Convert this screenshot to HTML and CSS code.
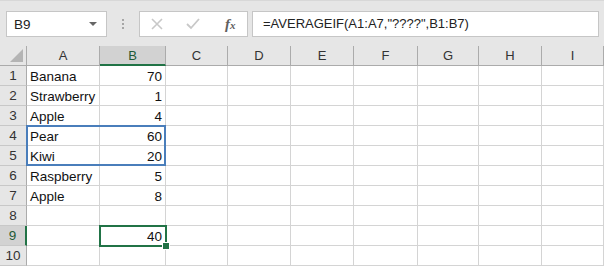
FILE: index.html
```html
<!DOCTYPE html>
<html lang="en">
<head>
    <meta charset="UTF-8">
    <title>AVERAGEIF</title>
    <link rel="stylesheet" href="styles.css">
</head>
<body>
    <div class="toolbar">
        <div class="name-box">
            <span>B9</span>
            <span class="caret"></span>
        </div>
        <div class="grip">
            <span></span><span></span><span></span>
        </div>
        <div class="fx-box">
            <svg width="12" height="12" viewBox="0 0 12 12"><path d="M1 1 L11 11 M11 1 L1 11" stroke="#c8c8c8" stroke-width="1.6" fill="none"/></svg>
            <svg width="14" height="12" viewBox="0 0 14 12"><path d="M1 6 L5 10 L13 1" stroke="#c8c8c8" stroke-width="1.8" fill="none"/></svg>
            <span class="fx">f<i>x</i></span>
        </div>
        <div class="formula">=AVERAGEIF(A1:A7,"????",B1:B7)</div>
    </div>

    <div class="sheet" id="sheet">
        <div class="corner"><span></span></div>
    </div>

    <script>
        const cols = ['A', 'B', 'C', 'D', 'E', 'F', 'G', 'H', 'I'];
        const data = {
            1: ['Banana', 70], 2: ['Strawberry', 1], 3: ['Apple', 4],
            4: ['Pear', 60], 5: ['Kiwi', 20], 6: ['Raspberry', 5],
            7: ['Apple', 8], 9: ['', 40]
        };
        const sheet = document.getElementById('sheet');

        cols.forEach(c => {
            const h = document.createElement('div');
            h.className = 'col-head' + (c === 'B' ? ' active' : '');
            h.textContent = c;
            sheet.appendChild(h);
        });

        for (let r = 1; r <= 10; r++) {
            const rh = document.createElement('div');
            rh.className = 'row-head' + (r === 9 ? ' active' : '');
            rh.textContent = r;
            sheet.appendChild(rh);
            cols.forEach((c, i) => {
                const cell = document.createElement('div');
                cell.className = 'cell' + (i === 1 ? ' num' : '');
                if (data[r] && i < 2) cell.textContent = data[r][i];
                sheet.appendChild(cell);
            });
        }

        const range = document.createElement('div');
        range.className = 'range';
        sheet.appendChild(range);

        const sel = document.createElement('div');
        sel.className = 'selection';
        sel.innerHTML = '<span class="handle"></span>';
        sheet.appendChild(sel);
    </script>
</body>
</html>
```

FILE: styles.css
```css
body {
    margin: 0;
    background: #ffffff;
    font-family: "Liberation Sans", Arial, sans-serif;
    width: 604px;
    height: 267px;
    overflow: hidden;
}

.toolbar {
    height: 46px;
    background: #e6e6e6;
    border-top: 1px solid #d8d8d8;
    box-sizing: border-box;
    display: flex;
    align-items: flex-start;
    padding: 10px 0 0 6px;
}

.name-box {
    width: 101px;
    height: 26px;
    box-sizing: border-box;
    background: #fff;
    border: 1px solid #c6c6c6;
    display: flex;
    align-items: center;
    justify-content: space-between;
    padding: 0 9px 0 7px;
    font-size: 13.5px;
    color: #222;
}

.caret {
    width: 0;
    height: 0;
    border-left: 4px solid transparent;
    border-right: 4px solid transparent;
    border-top: 4px solid #666;
}

.grip {
    width: 32px;
    height: 26px;
    display: flex;
    flex-direction: column;
    align-items: center;
    justify-content: center;
    gap: 2px;
}

.grip span {
    width: 2px;
    height: 2px;
    background: #a6a6a6;
}

.fx-box {
    width: 109px;
    height: 26px;
    box-sizing: border-box;
    background: #fff;
    border: 1px solid #c6c6c6;
    display: flex;
    align-items: center;
    padding-left: 11px;
    gap: 23px;
}

.fx {
    font-family: "Liberation Serif", "Times New Roman", serif;
    font-style: italic;
    font-weight: bold;
    font-size: 15px;
    color: #606060;
    margin-left: 2px;
}

.fx i {
    font-size: 11px;
}

.formula {
    margin-left: 4px;
    width: 347px;
    height: 26px;
    box-sizing: border-box;
    background: #fff;
    border: 1px solid #c6c6c6;
    padding-left: 10px;
    font-size: 13px;
    line-height: 24px;
    color: #222;
}

.sheet {
    position: relative;
    display: grid;
    grid-template-columns: 27px 73px 66px 62px 63px 63px 64px 61px 63px 62px;
    grid-auto-rows: 20px;
    font-size: 13.5px;
    color: #111;
}

.corner {
    background: #e6e6e6;
    border-right: 1px solid #ababab;
    border-bottom: 1px solid #ababab;
    box-sizing: border-box;
    position: relative;
}

.corner span {
    position: absolute;
    right: 3px;
    bottom: 3px;
    width: 0;
    height: 0;
    border-left: 13px solid transparent;
    border-bottom: 13px solid #b4b4b4;
}

.col-head {
    background: #e6e6e6;
    border-right: 1px solid #ababab;
    border-bottom: 1px solid #ababab;
    box-sizing: border-box;
    text-align: center;
    line-height: 20px;
    color: #333;
    font-size: 13px;
}

.col-head.active {
    background: #d2d2d2;
    border-bottom: 2px solid #217346;
    color: #1e5a36;
}

.row-head {
    background: #e6e6e6;
    border-right: 1px solid #ababab;
    border-bottom: 1px solid #c8c8c8;
    box-sizing: border-box;
    text-align: center;
    line-height: 20px;
    color: #333;
}

.row-head.active {
    background: #d2d2d2;
    border-right: 2px solid #217346;
    color: #1e5a36;
}

.cell {
    border-right: 1px solid #d4d4d4;
    border-bottom: 1px solid #d4d4d4;
    box-sizing: border-box;
    padding: 2px 3px 0 3px;
    line-height: 18px;
    white-space: nowrap;
}

.cell.num {
    text-align: right;
}

.range {
    position: absolute;
    left: 26px;
    top: 79px;
    width: 140px;
    height: 41px;
    border: 2px solid #4a7ebb;
    box-sizing: border-box;
    pointer-events: none;
}

.selection {
    position: absolute;
    left: 99px;
    top: 179px;
    width: 68px;
    height: 22px;
    border: 2px solid #217346;
    box-sizing: border-box;
}

.handle {
    position: absolute;
    right: -5px;
    bottom: -5px;
    width: 6px;
    height: 6px;
    background: #217346;
    border: 1px solid #fff;
}
```
